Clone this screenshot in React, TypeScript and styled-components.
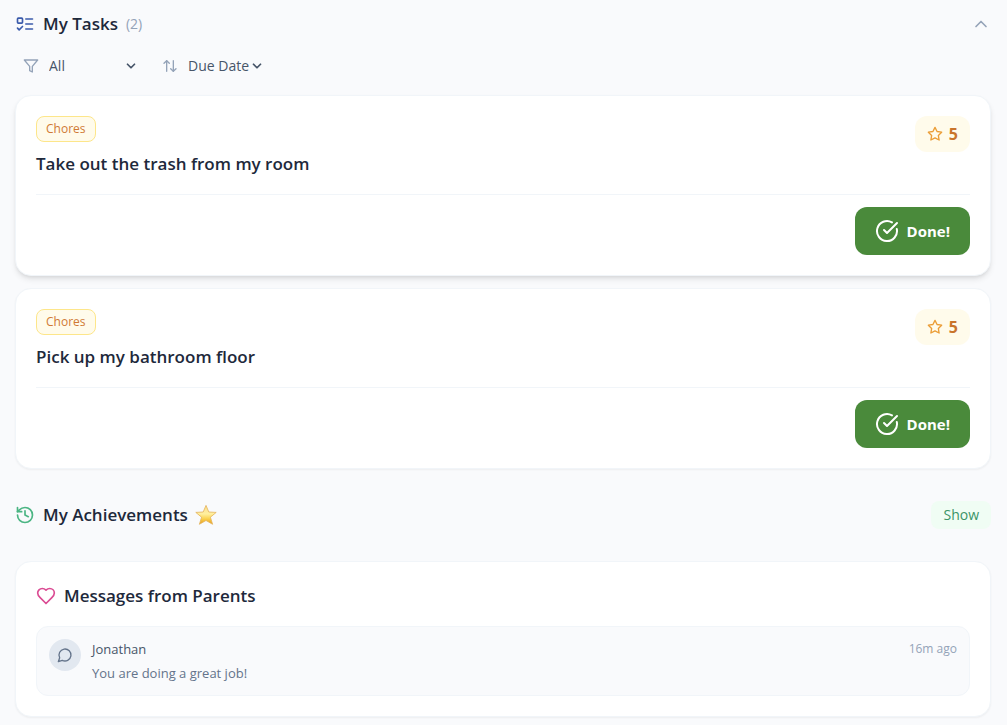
import React from "react";
import styled, { createGlobalStyle, css } from "styled-components";
import { ChevronUp, ChevronDown, ArrowUpDown, CircleCheckBig, History } from "lucide-react";

const GlobalStyle = createGlobalStyle`
  *, *::before, *::after { box-sizing: border-box; }
  body {
    margin: 0;
    background: #f9fafc;
    color: #1e293b;
    font-family: "Open Sans", "Noto Sans", sans-serif;
    font-size: 14px;
    line-height: 20px;
  }
  h2, h3, p, ul { margin: 0; padding: 0; }
  ul { list-style: none; }
  button, select { font: inherit; color: inherit; }
  svg { display: block; flex-shrink: 0; }
`;

const Page = styled.main`
  padding: 10px 16px 8px 15px;
`;

const SectionHeader = styled.header`
  display: flex;
  align-items: center;
  justify-content: space-between;
`;

const Heading = styled.h2`
  display: flex;
  align-items: center;
  gap: 8px;
  font-size: 17px;
  line-height: 28px;
  font-weight: 600;
`;

const HeadingLabel = styled.span`
  display: flex;
  align-items: center;
  gap: 6px;
`;

const Count = styled.span`
  color: #94a3b8;
  font-size: 14px;
  font-weight: 400;
`;

const CollapseButton = styled.button`
  border: 0;
  padding: 0;
  background: none;
  color: #94a3b8;
`;

const Toolbar = styled.div`
  display: flex;
  gap: 24px;
  padding: 18px 8px 19px;
`;

const Field = styled.label`
  display: flex;
  align-items: center;
  gap: 10px;
  color: #94a3b8;
`;

const SelectBox = styled.span<{ $width: number }>`
  display: grid;
  align-items: center;
  width: ${(p) => p.$width}px;
  color: #475569;
  > * { grid-area: 1 / 1; }
  > svg { justify-self: end; pointer-events: none; }
`;

const Select = styled.select`
  appearance: none;
  width: 100%;
  border: 0;
  padding: 0;
  background: none;
  font-size: 14px;
  line-height: 20px;
`;

const TaskList = styled.ul`
  display: grid;
  gap: 12px;
`;

const cardFrame = css<{ $raised?: boolean }>`
  border: 1px solid #f1f5f9;
  border-radius: 16px;
  padding: 20px;
  background: #fff;
  box-shadow: ${(p) =>
    p.$raised
      ? "0 4px 6px -1px rgba(0,0,0,.1), 0 2px 4px -2px rgba(0,0,0,.1)"
      : "0 1px 2px rgba(0,0,0,.05)"};
`;

const TaskCard = styled.li`${cardFrame}`;
const MessagesCard = styled.section`${cardFrame}`;

const TaskTop = styled.div`
  display: flex;
  align-items: flex-start;
  justify-content: space-between;
  padding-bottom: 16px;
  border-bottom: 1px solid #f1f5f9;
`;

const Category = styled.span`
  display: inline-block;
  border: 1px solid #fde68a;
  border-radius: 8px;
  padding: 4px 9px;
  background: #fffbeb;
  color: #d07a35;
  font-size: 12px;
  line-height: 16px;
`;

const TaskTitle = styled.h3`
  margin-top: 8px;
  font-size: 17px;
  line-height: 28px;
  font-weight: 600;
`;

const Points = styled.span`
  display: flex;
  align-items: center;
  gap: 6px;
  border-radius: 12px;
  padding: 6px 12px;
  background: #fffbeb;
  color: #c9742b;
  font-size: 16px;
  line-height: 24px;
  font-weight: 700;
  > svg { color: #eb9d36; }
`;

const TaskActions = styled.div`
  display: flex;
  justify-content: flex-end;
  padding-top: 12px;
`;

const DoneButton = styled.button`
  display: flex;
  align-items: center;
  gap: 8px;
  border: 0;
  border-radius: 12px;
  padding: 12px 20px;
  background: #4a8a3b;
  color: #fff;
  font-size: 15px;
  line-height: 24px;
  font-weight: 700;
`;

const Achievements = styled(SectionHeader)`
  margin: 32px 0;
`;

const ShowButton = styled.button`
  border: 0;
  border-radius: 8px;
  padding: 4px 12px;
  background: #f0fdf4;
  color: #3b9467;
  font-weight: 500;
`;

const Message = styled.article`
  display: flex;
  gap: 11px;
  margin-top: 16px;
  border: 1px solid #f1f5f9;
  border-radius: 12px;
  padding: 12px;
  background: #f9fafc;
`;

const Avatar = styled.span`
  display: grid;
  place-items: center;
  width: 32px;
  height: 32px;
  border-radius: 50%;
  background: #e2e8f0;
  color: #64748b;
`;

const MessageBody = styled.div`
  flex: 1;
  display: grid;
  gap: 4px;
  font-size: 13px;
  color: #64748b;
`;

const MessageMeta = styled.div`
  display: flex;
  justify-content: space-between;
  color: #475569;
  font-weight: 500;
`;

const Time = styled.time`
  color: #94a3b8;
  font-size: 12px;
  font-weight: 400;
`;

const tasks = [
  { title: "Take out the trash from my room", points: 5, raised: true },
  { title: "Pick up my bathroom floor", points: 5, raised: false },
];

const glyphs = {
  todo: "M4 5h4a1 1 0 0 1 1 1v4a1 1 0 0 1-1 1H4a1 1 0 0 1-1-1V6a1 1 0 0 1 1-1z M3 17l2 2 4-4 M13 6h8 M13 12h8 M13 18h8",
  filter: "M22 3H2l8 9.46V19l4 2v-8.54z",
  star: "M12 2l3.09 6.26L22 9.27l-5 4.87 1.18 6.88L12 17.77l-6.18 3.25L7 14.14 2 9.27l6.91-1.01z",
  heart:
    "M19 14c1.49-1.46 3-3.21 3-5.5A5.5 5.5 0 0 0 16.5 3c-1.76 0-3 .5-4.5 2-1.5-1.5-2.74-2-4.5-2A5.5 5.5 0 0 0 2 8.5c0 2.3 1.5 4.05 3 5.5l7 7Z",
  message: "M7.9 20A9 9 0 1 0 4 16.1L2 22Z",
};

function Glyph({ name, size, color = "currentColor" }: { name: keyof typeof glyphs; size: number; color?: string }) {
  return (
    <svg width={size} height={size} viewBox="0 0 24 24" fill="none" stroke={color} strokeWidth="2" strokeLinecap="round" strokeLinejoin="round" aria-hidden="true">
      <path d={glyphs[name]} />
    </svg>
  );
}

function GoldStar() {
  return (
    <svg width="24" height="22" viewBox="0 0 24 22" role="img" aria-label="star">
      <defs>
        <linearGradient id="gold" x1="0" y1="0" x2="0" y2="1">
          <stop offset="0" stopColor="#fbdc8a" />
          <stop offset=".45" stopColor="#fff0a0" />
          <stop offset=".7" stopColor="#fbd350" />
          <stop offset="1" stopColor="#e79a1a" />
        </linearGradient>
      </defs>
      <path d="M12 1.4 14.8 8 22.2 8.4l-5.8 4.8 2.2 7.1L12 16.5l-6.6 3.8 2.2-7.1L1.8 8.4 9.2 8z" fill="url(#gold)" stroke="#e3b25a" strokeWidth=".8" strokeLinejoin="round" />
    </svg>
  );
}

export default function App() {
  return (
    <>
      <GlobalStyle />
      <Page>
        <SectionHeader>
          <Heading>
            <Glyph name="todo" size={20} color="#3b5bab" />
            My Tasks <Count>(2)</Count>
          </Heading>
          <CollapseButton aria-label="Collapse tasks"><ChevronUp size={20} /></CollapseButton>
        </SectionHeader>
        <Toolbar>
          <Field>
            <Glyph name="filter" size={16} />
            <SelectBox $width={89}>
              <Select aria-label="Filter" defaultValue="All"><option>All</option></Select>
              <ChevronDown size={14} strokeWidth={3} />
            </SelectBox>
          </Field>
          <Field>
            <ArrowUpDown size={16} />
            <SelectBox $width={76}>
              <Select aria-label="Sort" defaultValue="Due Date"><option>Due Date</option></Select>
              <ChevronDown size={14} strokeWidth={3} />
            </SelectBox>
          </Field>
        </Toolbar>
        <TaskList>
          {tasks.map((t) => (
            <TaskCard key={t.title} $raised={t.raised}>
              <TaskTop>
                <div>
                  <Category>Chores</Category>
                  <TaskTitle>{t.title}</TaskTitle>
                </div>
                <Points><Glyph name="star" size={16} />{t.points}</Points>
              </TaskTop>
              <TaskActions>
                <DoneButton><CircleCheckBig size={24} />Done!</DoneButton>
              </TaskActions>
            </TaskCard>
          ))}
        </TaskList>
        <Achievements>
          <Heading>
            <History size={20} color="#4bb583" />
            <HeadingLabel>My Achievements <GoldStar /></HeadingLabel>
          </Heading>
          <ShowButton>Show</ShowButton>
        </Achievements>
        <MessagesCard>
          <Heading><Glyph name="heart" size={20} color="#db4b93" />Messages from Parents</Heading>
          <Message>
            <Avatar><Glyph name="message" size={16} /></Avatar>
            <MessageBody>
              <MessageMeta>Jonathan<Time>16m ago</Time></MessageMeta>
              <p>You are doing a great job!</p>
            </MessageBody>
          </Message>
        </MessagesCard>
      </Page>
    </>
  );
}
